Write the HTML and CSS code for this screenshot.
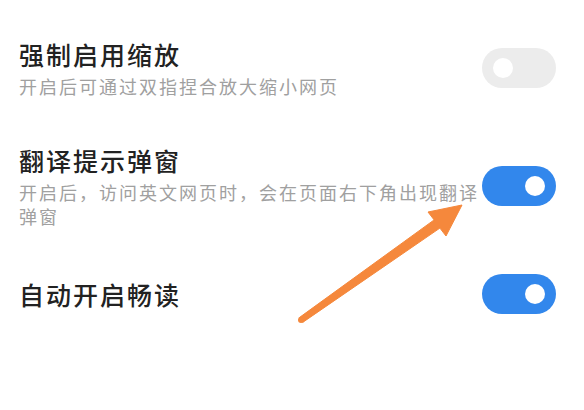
FILE: index.html
```html
<!DOCTYPE html>
<html lang="zh">
<head>
<meta charset="utf-8">
<link rel="stylesheet" href="styles.css">
</head>
<body>
<div class="page">
  <div class="list">
    <div class="row">
      <div class="text">
        <div class="title">强制启用缩放</div>
        <div class="sub">开启后可通过双指捏合放大缩小网页</div>
      </div>
      <div class="toggle off"><span class="knob"></span></div>
    </div>
    <div class="row">
      <div class="text">
        <div class="title">翻译提示弹窗</div>
        <div class="sub">开启后，访问英文网页时，会在页面右下角出现翻译弹窗</div>
      </div>
      <div class="toggle on"><span class="knob"></span></div>
    </div>
    <div class="row">
      <div class="text">
        <div class="title">自动开启畅读</div>
      </div>
      <div class="toggle on"><span class="knob"></span></div>
    </div>
  </div>
  <svg class="arrow" width="584" height="410" viewBox="0 0 584 410">
    <polygon points="299.3,317.6 434.1,219.9 428,212 462,205 446,236 439.9,228.1 302.7,322.4" fill="#f5883c" stroke="#f5883c" stroke-width="1" stroke-linejoin="round"/>
    <circle cx="301" cy="320" r="3" fill="#f5883c"/>
  </svg>
</div>
</body>
</html>
```

FILE: styles.css
```css
html, body {
  margin: 0;
  padding: 0;
  background: #ffffff;
}
body {
  font-family: "Noto Sans CJK SC", "Noto Sans", sans-serif;
  width: 584px;
  height: 410px;
  overflow: hidden;
}
.page {
  position: relative;
  width: 584px;
  height: 410px;
}
.list {
  display: flex;
  flex-direction: column;
  gap: 46px;
  padding-top: 38px;
}
.row {
  display: flex;
  align-items: center;
  padding: 0 28px 0 19px;
}
.text {
  flex: 1;
  min-width: 0;
  margin-right: 0;
}
.title {
  font-size: 25px;
  line-height: 32px;
  letter-spacing: 2px;
  color: #222222;
  font-weight: 500;
}
.sub {
  margin-top: 4px;
  font-size: 18px;
  line-height: 24px;
  letter-spacing: 2px;
  color: #a0a0a0;
}
.toggle {
  flex: none;
  width: 74px;
  height: 40px;
  border-radius: 20px;
  display: flex;
  align-items: center;
  padding: 0 11px;
  box-sizing: border-box;
}
.toggle .knob {
  width: 20px;
  height: 20px;
  border-radius: 50%;
  background: #ffffff;
}
.toggle.off {
  background: #ececec;
  justify-content: flex-start;
}
.toggle.on {
  background: #3287ec;
  justify-content: flex-end;
}
.arrow {
  position: absolute;
  left: 0;
  top: 0;
  pointer-events: none;
}
```
